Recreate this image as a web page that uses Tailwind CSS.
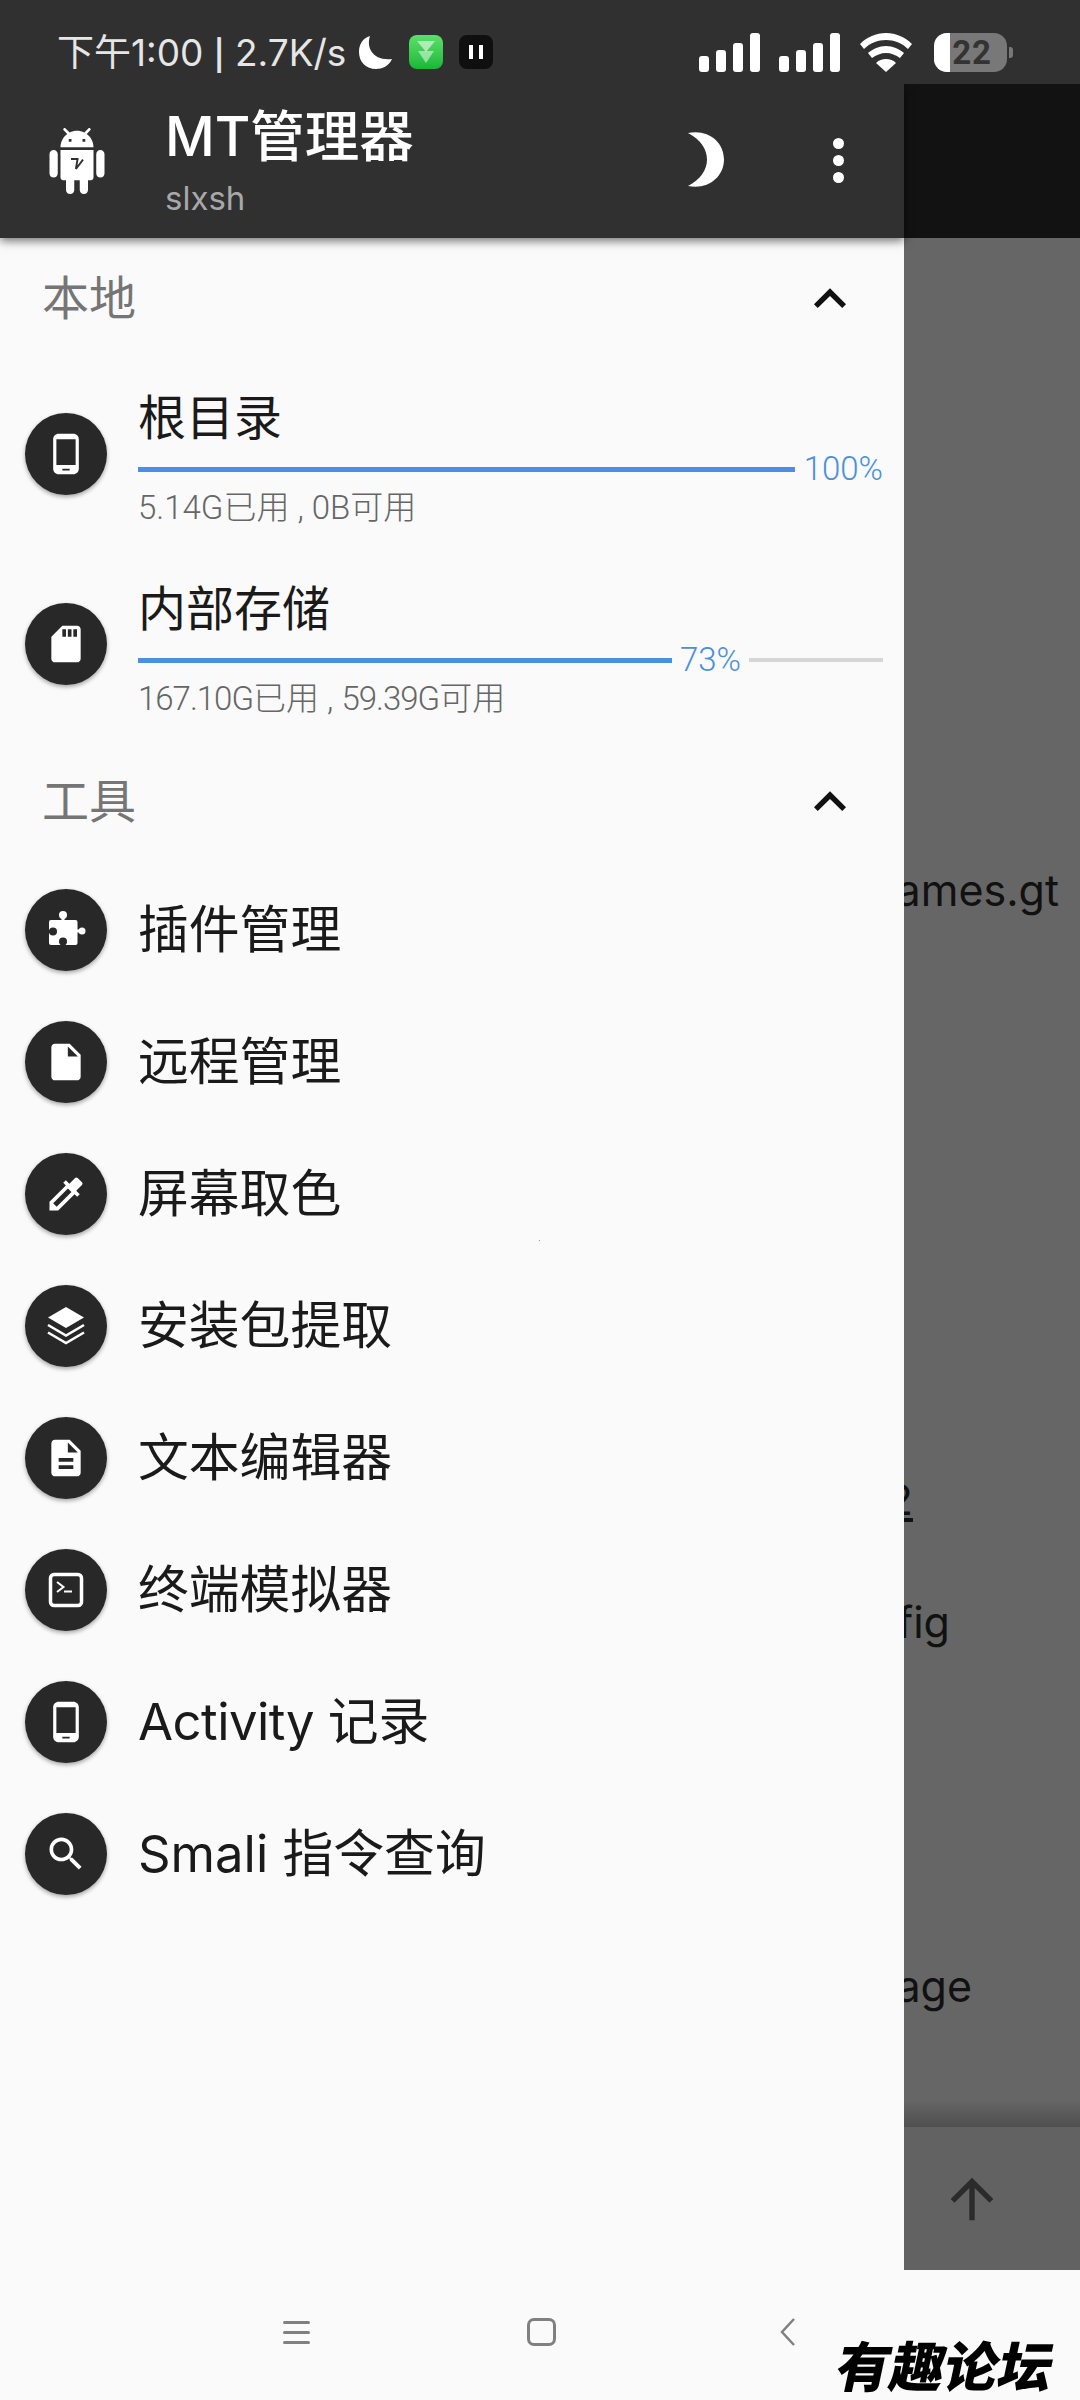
<!DOCTYPE html>
<html lang="zh-CN">
<head>
    <meta charset="UTF-8">
    <meta name="viewport" content="width=device-width, initial-scale=1.0">
    <title>MT管理器</title>
    <script src="https://cdn.jsdelivr.net/npm/@tailwindcss/browser@4"></script>
</head>
<body class="bg-[#fafafa]">
<div class="relative w-[1080px] h-[2400px] overflow-hidden flex flex-col bg-[#fafafa] font-['Inter','Noto_Sans_CJK_SC',sans-serif]">

    <!-- status bar -->
    <div class="relative z-20 h-[84px] shrink-0 bg-[#303030] flex items-center justify-between pl-[57px] pr-[67px] pt-[20px]">
        <div class="flex items-center">
            <span class="text-[37px] leading-none text-[#e6e6e6] whitespace-nowrap w-[302px]">下午1:00 <span class="text-[30px] font-semibold">|</span> 2.7K/s</span>
            <svg class="w-[34px] h-[34px]" viewBox="0 0 34 34"><path fill="#fff" d="M11 1C7 13 14 26 33 24 30 31 23 34 17 34 7 34 0 27 0 17 0 9 4 3 11 1Z"/></svg>
            <div class="w-[34px] h-[34px] ml-[16px] rounded-[8px] bg-gradient-to-b from-[#5be06a] to-[#12b838] flex items-center justify-center">
                <svg class="w-[20px] h-[24px]" viewBox="0 0 20 24"><path fill="#d8f7dc" fill-opacity=".7" d="M1 1h18l-9 11z"/><path fill="#d8f7dc" fill-opacity=".6" d="M2 11h16l-8 12z"/></svg>
            </div>
            <div class="w-[34px] h-[34px] ml-[16px] rounded-[8px] bg-[#0f0f0f] flex items-center justify-center gap-[6px]">
                <div class="w-[4px] h-[14px] bg-white"></div>
                <div class="w-[4px] h-[14px] bg-white"></div>
            </div>
        </div>
        <div class="flex items-center">
            <div class="flex items-end gap-[7px] h-[39px]">
                <div class="w-[10px] h-[16px] rounded-[3px] bg-white"></div>
                <div class="w-[10px] h-[22px] rounded-[3px] bg-white"></div>
                <div class="w-[10px] h-[29px] rounded-[3px] bg-white"></div>
                <div class="w-[10px] h-[39px] rounded-[3px] bg-white"></div>
            </div>
            <div class="flex items-end gap-[7px] h-[39px] ml-[19px]">
                <div class="w-[10px] h-[16px] rounded-[3px] bg-white"></div>
                <div class="w-[10px] h-[22px] rounded-[3px] bg-white"></div>
                <div class="w-[10px] h-[29px] rounded-[3px] bg-white"></div>
                <div class="w-[10px] h-[39px] rounded-[3px] bg-white"></div>
            </div>
            <svg class="w-[52px] h-[39px] ml-[20px]" viewBox="0 0 52 39"><path fill="#fff" d="M26 0C16 0 7 4 0 11l4 5C10 10 18 7 26 7s16 3 22 9l4-5C45 4 36 0 26 0Z"/><path fill="#fff" d="M26 13c-7 0-13 3-18 7l4 5c4-3 9-5 14-5s10 2 14 5l4-5c-5-4-11-7-18-7Z"/><path fill="#fff" d="M26 26c-4 0-7 1-10 4l10 9 10-9c-3-3-6-4-10-4Z"/></svg>
            <div class="relative ml-[22px] w-[73px] h-[39px] rounded-[13px] bg-[#787878] overflow-hidden flex items-center justify-end pr-[15px]">
                <div class="absolute left-0 top-0 bottom-0 w-[16px] bg-white"></div>
                <span class="relative text-[33px] leading-none font-bold text-[#333] font-['Roboto'] tracking-[1px]">22</span>
            </div>
            <div class="w-[4px] h-[11px] ml-[2px] rounded-r-[3px] bg-[#787878]"></div>
        </div>
    </div>

    <div class="flex-1 flex min-h-0">
        <!-- drawer -->
        <div class="relative w-[904px] shrink-0 bg-[#fafafa] flex flex-col">
            <div class="relative z-10 h-[154px] shrink-0 bg-[#303030] shadow-[0_3px_9px_rgba(0,0,0,0.55)] flex items-center pl-[44px]">
                <svg class="w-[66px] h-[66px] shrink-0" viewBox="0 0 24 24">
                    <path fill="#fff" d="M6 18c0 .55.45 1 1 1h1v3.5c0 .83.67 1.5 1.5 1.5s1.5-.67 1.5-1.5V19h2v3.5c0 .83.67 1.5 1.5 1.5s1.5-.67 1.5-1.5V19h1c.55 0 1-.45 1-1V8H6v10zM3.5 8C2.67 8 2 8.67 2 9.5v7c0 .83.67 1.5 1.5 1.5S5 17.33 5 16.5v-7C5 8.67 4.33 8 3.5 8zm17 0c-.83 0-1.5.67-1.5 1.5v7c0 .83.67 1.5 1.5 1.5s1.5-.67 1.5-1.5v-7c0-.83-.67-1.5-1.5-1.5zm-4.97-5.84l1.3-1.3c.2-.2.2-.51 0-.71-.2-.2-.51-.2-.71 0l-1.48 1.48C13.85 1.23 12.95 1 12 1c-.96 0-1.86.23-2.66.63L7.85.15c-.2-.2-.51-.2-.71 0-.2.2-.2.51 0 .71l1.31 1.31C6.97 3.26 6 5.01 6 7h12c0-1.99-.97-3.75-2.47-4.84zM10 5H9V4h1v1zm5 0h-1V4h1v1z"/>
                    <path fill="none" stroke="#303030" stroke-width=".7" d="M9.8 11.3h2.4l-.6 3.6 2.6-3.4"/>
                </svg>
                <div class="ml-[55px] w-[276px] flex flex-col">
                    <span class="text-[54.5px] leading-[62px] font-medium text-white whitespace-nowrap">MT管理器</span>
                    <span class="text-[33px] leading-[38px] text-[#a8a8a8] mt-[12px]">slxsh</span>
                </div>
                <svg class="w-[36px] h-[55px] ml-[247px] mt-[-3px] shrink-0" viewBox="0 0 36 55"><path fill="#fff" d="M0 1C20-3 36 10 36 27.5 36 45 20 58 0 54 12 48 19 38 19 27.5 19 17 12 7 0 1Z"/></svg>
                <div class="flex flex-col gap-[6px] ml-[109px] mt-[-2px] shrink-0">
                    <div class="w-[11px] h-[11px] rounded-full bg-white"></div>
                    <div class="w-[11px] h-[11px] rounded-full bg-white"></div>
                    <div class="w-[11px] h-[11px] rounded-full bg-white"></div>
                </div>
            </div>

            <!-- 本地 -->
            <div class="h-[121px] shrink-0 flex items-center justify-between pl-[42px] pr-[42px]">
                <span class="text-[47px] text-[#757575]">本地</span>
                <svg class="w-[64px] h-[64px]" viewBox="0 0 24 24"><path fill="#111" d="M12 8l-6 6 1.41 1.41L12 10.83l4.59 4.58L18 14z"/></svg>
            </div>

            <div class="h-[190px] shrink-0 flex items-center pl-[25px] pr-[21px]">
                <div class="w-[82px] h-[82px] shrink-0 rounded-full bg-[#282828] shadow-[0_2px_4px_rgba(0,0,0,0.35)] flex items-center justify-center">
                    <svg class="w-[44px] h-[44px]" viewBox="0 0 24 24"><path fill="#fff" d="M16 1H8C6.34 1 5 2.34 5 4v16c0 1.66 1.34 3 3 3h8c1.66 0 3-1.34 3-3V4c0-1.66-1.34-3-3-3zm-2 20h-4v-1h4v1zm3.25-3H6.75V4h10.5v14z"/></svg>
                </div>
                <div class="flex-1 ml-[31px] pt-[6px] flex flex-col">
                    <div class="h-[60px] flex items-center text-[48px] text-[#1a1a1a]">根目录</div>
                    <div class="h-[42px] flex items-center gap-[9px]">
                        <div class="flex-1 h-[5px] bg-[#4a90e2]"></div>
                        <span class="text-[33px] text-[#4a90d9] font-['Roboto'] font-light">100%</span>
                    </div>
                    <div class="h-[36px] flex items-center text-[33px] text-[#666] font-['Roboto','Noto_Sans_CJK_SC'] font-light whitespace-nowrap">5.14G已用 , 0B可用</div>
                </div>
            </div>

            <div class="h-[190px] shrink-0 flex items-center pl-[25px] pr-[21px]">
                <div class="w-[82px] h-[82px] shrink-0 rounded-full bg-[#282828] shadow-[0_2px_4px_rgba(0,0,0,0.35)] flex items-center justify-center">
                    <svg class="w-[44px] h-[44px]" viewBox="0 0 24 24"><path fill="#fff" d="M18 2h-8L4.02 8 4 20c0 1.1.9 2 2 2h12c1.1 0 2-.9 2-2V4c0-1.1-.9-2-2-2zm-6 6h-2V4h2v4zm3 0h-2V4h2v4zm3 0h-2V4h2v4z"/></svg>
                </div>
                <div class="flex-1 ml-[31px] pt-[8px] flex flex-col">
                    <div class="h-[60px] flex items-center text-[48px] text-[#1a1a1a]">内部存储</div>
                    <div class="h-[42px] flex items-center gap-[8px]">
                        <div class="w-[534px] h-[5px] bg-[#4a90e2]"></div>
                        <span class="text-[33px] text-[#4a90d9] font-['Roboto'] font-light">73%</span>
                        <div class="flex-1 h-[4px] bg-[#d6d6d6]"></div>
                    </div>
                    <div class="h-[36px] flex items-center text-[33px] text-[#666] font-['Roboto','Noto_Sans_CJK_SC'] font-light whitespace-pre"><span class="tracking-[-1px]">167.10G</span>已用 , <span class="tracking-[-1px]">59.39G</span>可用</div>
                </div>
            </div>

            <!-- 工具 -->
            <div class="h-[125px] shrink-0 flex items-center justify-between pl-[42px] pr-[42px]">
                <span class="text-[47px] text-[#757575]">工具</span>
                <svg class="w-[64px] h-[64px]" viewBox="0 0 24 24"><path fill="#111" d="M12 8l-6 6 1.41 1.41L12 10.83l4.59 4.58L18 14z"/></svg>
            </div>

            <div class="h-[132px] shrink-0 flex items-center pl-[25px]">
                <div class="w-[82px] h-[82px] shrink-0 rounded-full bg-[#282828] shadow-[0_2px_4px_rgba(0,0,0,0.35)] flex items-center justify-center">
                    <svg class="w-[44px] h-[44px]" viewBox="0 0 44 44">
                        <path fill="#fff" d="M5 14a2 2 0 0 1 2-2h10.500V8h3v4h11a2 2 0 0 1 2 2v7.500h1.500v3H33.500V35a2 2 0 0 1-2 2H7a2 2 0 0 1-2-2z"/>
                        <circle cx="19" cy="7" r="4" fill="#fff"/>
                        <circle cx="38" cy="23" r="3.500" fill="#fff"/>
                        <circle cx="9" cy="23.500" r="4" fill="#282828"/>
                        <circle cx="19" cy="33.500" r="4" fill="#282828"/>
                        <path fill="#282828" d="M4 22h3v3H4zM17.500 34h3v4h-3z"/>
                    </svg>
                </div>
                <span class="ml-[31px] text-[50.8px] text-[#1a1a1a] whitespace-nowrap">插件管理</span>
            </div>
            <div class="h-[132px] shrink-0 flex items-center pl-[25px]">
                <div class="w-[82px] h-[82px] shrink-0 rounded-full bg-[#282828] shadow-[0_2px_4px_rgba(0,0,0,0.35)] flex items-center justify-center">
                    <svg class="w-[44px] h-[44px]" viewBox="0 0 24 24"><path fill="#fff" d="M6 2c-1.1 0-1.99.9-1.99 2L4 20c0 1.1.89 2 1.99 2H18c1.1 0 2-.9 2-2V8l-6-6H6zm7 7V3.5L18.5 9H13z"/></svg>
                </div>
                <span class="ml-[31px] text-[50.8px] text-[#1a1a1a] whitespace-nowrap">远程管理</span>
            </div>
            <div class="h-[132px] shrink-0 flex items-center pl-[25px]">
                <div class="w-[82px] h-[82px] shrink-0 rounded-full bg-[#282828] shadow-[0_2px_4px_rgba(0,0,0,0.35)] flex items-center justify-center">
                    <svg class="w-[44px] h-[44px]" viewBox="0 0 24 24"><path fill="#fff" d="M20.71 5.63l-2.34-2.34c-.39-.39-1.02-.39-1.41 0l-3.12 3.12-1.93-1.91-1.41 1.41 1.42 1.42L3 16.25V21h4.75l8.92-8.92 1.42 1.42 1.41-1.41-1.92-1.92 3.12-3.12c.4-.4.4-1.03.01-1.42zM6.92 19L5 17.08l8.06-8.06 1.92 1.92L6.92 19z"/></svg>
                </div>
                <span class="ml-[31px] text-[50.8px] text-[#1a1a1a] whitespace-nowrap">屏幕取色</span>
            </div>
            <div class="h-[132px] shrink-0 flex items-center pl-[25px]">
                <div class="w-[82px] h-[82px] shrink-0 rounded-full bg-[#282828] shadow-[0_2px_4px_rgba(0,0,0,0.35)] flex items-center justify-center">
                    <svg class="w-[44px] h-[44px]" viewBox="0 0 44 44"><path fill="#fff" d="M22 3l18 10.500L22 24 4 13.500z"/><path fill="none" stroke="#fff" stroke-width="2.600" d="M4 21l18 10.500L40 21M4 28.500L22 39l18-10.500"/></svg>
                </div>
                <span class="ml-[31px] text-[50.8px] text-[#1a1a1a] whitespace-nowrap">安装包提取</span>
            </div>
            <div class="h-[132px] shrink-0 flex items-center pl-[25px]">
                <div class="w-[82px] h-[82px] shrink-0 rounded-full bg-[#282828] shadow-[0_2px_4px_rgba(0,0,0,0.35)] flex items-center justify-center">
                    <svg class="w-[44px] h-[44px]" viewBox="0 0 24 24"><path fill="#fff" d="M14 2H6c-1.1 0-1.99.9-1.99 2L4 20c0 1.1.89 2 1.99 2H18c1.1 0 2-.9 2-2V8l-6-6zm2 16H8v-2h8v2zm0-4H8v-2h8v2zm-3-5V3.5L18.5 9H13z"/></svg>
                </div>
                <span class="ml-[31px] text-[50.8px] text-[#1a1a1a] whitespace-nowrap">文本编辑器</span>
            </div>
            <div class="h-[132px] shrink-0 flex items-center pl-[25px]">
                <div class="w-[82px] h-[82px] shrink-0 rounded-full bg-[#282828] shadow-[0_2px_4px_rgba(0,0,0,0.35)] flex items-center justify-center">
                    <svg class="w-[44px] h-[44px]" viewBox="0 0 44 44"><rect x="6.500" y="6.500" width="31" height="31" rx="3.500" fill="none" stroke="#fff" stroke-width="3.500"/><path fill="none" stroke="#fff" stroke-width="2" d="M13 14l6.500 5-6.500 5"/><path fill="none" stroke="#fff" stroke-width="2" d="M20 23.500h8"/></svg>
                </div>
                <span class="ml-[31px] text-[50.8px] text-[#1a1a1a] whitespace-nowrap">终端模拟器</span>
            </div>
            <div class="h-[132px] shrink-0 flex items-center pl-[25px]">
                <div class="w-[82px] h-[82px] shrink-0 rounded-full bg-[#282828] shadow-[0_2px_4px_rgba(0,0,0,0.35)] flex items-center justify-center">
                    <svg class="w-[44px] h-[44px]" viewBox="0 0 24 24"><path fill="#fff" d="M16 1H8C6.34 1 5 2.34 5 4v16c0 1.66 1.34 3 3 3h8c1.66 0 3-1.34 3-3V4c0-1.66-1.34-3-3-3zm-2 20h-4v-1h4v1zm3.25-3H6.75V4h10.5v14z"/></svg>
                </div>
                <span class="ml-[31px] text-[50.8px] text-[#1a1a1a] whitespace-pre"><span class="tracking-[-0.5px]">Activity </span>记录</span>
            </div>
            <div class="h-[132px] shrink-0 flex items-center pl-[25px]">
                <div class="w-[82px] h-[82px] shrink-0 rounded-full bg-[#282828] shadow-[0_2px_4px_rgba(0,0,0,0.35)] flex items-center justify-center">
                    <svg class="w-[44px] h-[44px]" viewBox="0 0 24 24"><path fill="#fff" d="M15.500 14h-.79l-.28-.27C15.410 12.590 16 11.110 16 9.500 16 5.910 13.090 3 9.500 3S3 5.910 3 9.500 5.910 16 9.500 16c1.610 0 3.090-.59 4.230-1.570l.27.28v.79l5 4.990L20.490 19l-4.990-5zm-6 0C7.010 14 5 11.990 5 9.500S7.010 5 9.500 5 14 7.010 14 9.500 11.990 14 9.500 14z"/></svg>
                </div>
                <span class="ml-[31px] text-[50.8px] text-[#1a1a1a] whitespace-nowrap">Smali 指令查询</span>
            </div>
        </div>

        <!-- dimmed page behind the drawer -->
        <div class="flex-1 min-w-0 overflow-hidden flex flex-col bg-[#666] text-[#111] text-[43px] font-['Inter']">
            <div class="h-[154px] shrink-0 bg-[#121212]"></div>
            <div class="h-[708px] shrink-0 flex items-end justify-end pr-[21px] pb-[24px] whitespace-nowrap">games.gt</div>
            <div class="h-[585px] shrink-0 flex items-end justify-end pr-[167px] whitespace-nowrap underline">2</div>
            <div class="h-[123px] shrink-0 flex items-end justify-end pr-[130px] whitespace-nowrap">config</div>
            <div class="h-[364px] shrink-0 flex items-end justify-end pr-[108px] whitespace-nowrap">package</div>
            <div class="flex-1"></div>
            <div class="h-[27px] shrink-0 bg-gradient-to-b from-[#666] to-[#4f4f4f]"></div>
            <div class="h-[143px] shrink-0 bg-[#626262] flex items-center justify-center pr-[40px]">
                <svg class="w-[64px] h-[64px]" viewBox="0 0 24 24"><path fill="#2b2b2b" d="M4 12l1.410 1.410L11 7.830V20h2V7.830l5.580 5.590L20 12l-8-8-8 8z"/></svg>
            </div>
        </div>
    </div>

    <!-- nav bar -->
    <div class="h-[130px] shrink-0 bg-[#fafafa] flex items-center pl-[283px] pb-[6px]">
        <div class="w-[27px] flex flex-col gap-[7px]">
            <div class="h-[3px] rounded-full bg-[#808080]"></div>
            <div class="h-[3px] rounded-full bg-[#808080]"></div>
            <div class="h-[3px] rounded-full bg-[#808080]"></div>
        </div>
        <div class="w-[29px] h-[28px] ml-[217px] rounded-[7px] border-[3px] border-[#808080]"></div>
        <svg class="w-[15px] h-[28px] ml-[224px]" viewBox="0 0 15 28"><path fill="none" stroke="#808080" stroke-width="2.500" d="M14 1L2 14l12 13"/></svg>
    </div>

    <!-- forum watermark -->
    <div class="absolute left-[838px] top-[2330px] text-[54px] leading-[68px] font-black text-black whitespace-nowrap -skew-x-12 font-['Noto_Sans_CJK_SC']">有趣论坛</div>
    <div class="absolute left-[539px] top-[1240px] w-px h-px bg-[#999]"></div>
</div>
</body>
</html>
